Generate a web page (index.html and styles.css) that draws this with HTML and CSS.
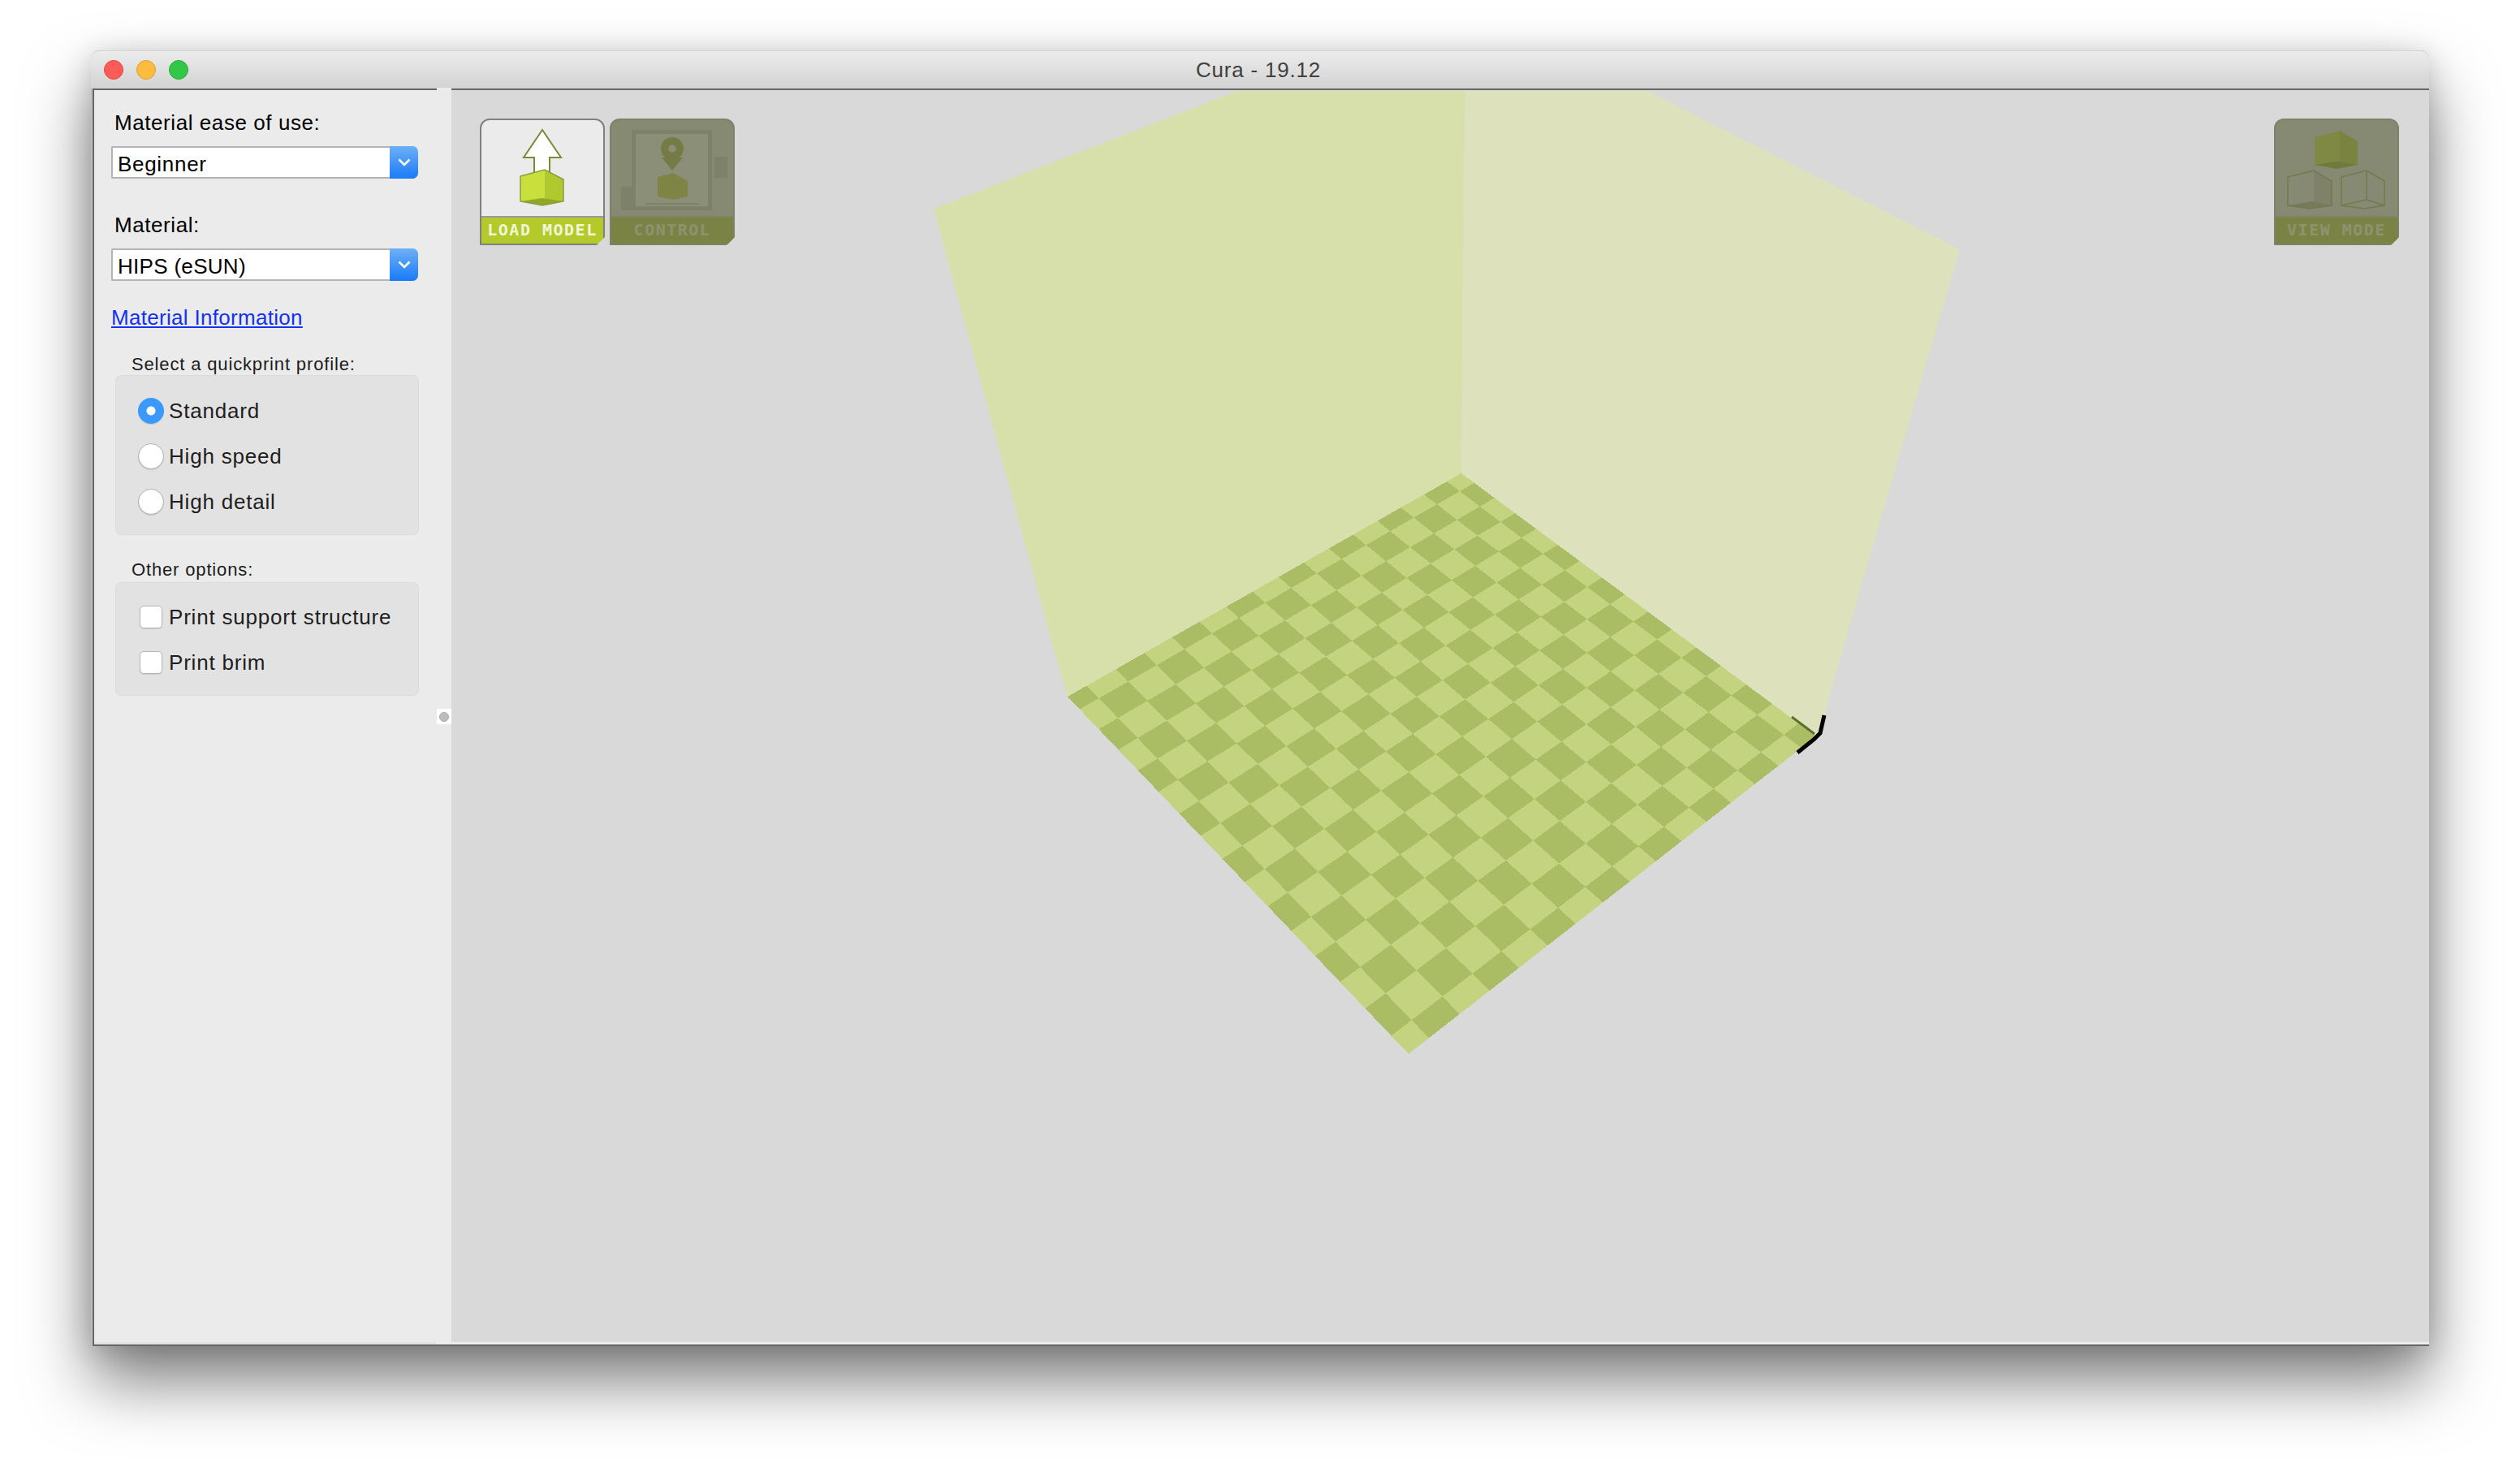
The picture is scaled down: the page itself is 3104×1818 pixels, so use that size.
FILE: index.html
```html
<!DOCTYPE html>
<html lang="en">
<head>
<meta charset="utf-8">
<title>Cura - 19.12</title>
<link rel="stylesheet" href="styles.css">
</head>
<body>
<div class="window">
  <header class="titlebar">
    <div class="lights">
      <span class="light light-close"></span>
      <span class="light light-min"></span>
      <span class="light light-max"></span>
    </div>
    <div class="title">Cura - 19.12</div>
  </header>
  <div class="main">
    <aside class="sidebar">
      <span class="splitter-cap"></span>
      <span class="splitter-handle"><span class="splitter-dot"></span></span>
      <div class="label label-first">Material ease of use:</div>
      <div class="select">
        <span class="select-value">Beginner</span>
        <span class="select-arrow"><svg width="16" height="10" viewBox="0 0 16 10"><polyline points="1.5,1.5 8,8 14.500,1.5" fill="none" stroke="#fff" stroke-width="2.600"/></svg></span>
      </div>
      <div class="label label-next">Material:</div>
      <div class="select">
        <span class="select-value select-value-tight">HIPS (eSUN)</span>
        <span class="select-arrow"><svg width="16" height="10" viewBox="0 0 16 10"><polyline points="1.5,1.5 8,8 14.500,1.5" fill="none" stroke="#fff" stroke-width="2.600"/></svg></span>
      </div>
      <a class="link" href="#">Material Information</a>
      <div class="group-title">Select a quickprint profile:</div>
      <div class="group group-radio">
        <div class="row"><span class="radio radio-on"></span><span>Standard</span></div>
        <div class="row"><span class="radio"></span><span>High speed</span></div>
        <div class="row"><span class="radio"></span><span>High detail</span></div>
      </div>
      <div class="group-title">Other options:</div>
      <div class="group group-check">
        <div class="row"><span class="check"></span><span>Print support structure</span></div>
        <div class="row"><span class="check"></span><span>Print brim</span></div>
      </div>
    </aside>
    <section class="viewport">
      <svg class="scene" viewBox="556 111 2436 1545" preserveAspectRatio="none">
        <polygon class="wall-left" points="1524,112 1805,112 1803,222 1800,583 1315,858 1298,800 1150,257"/>
        <polygon class="wall-right" points="1805,112 2029,112 2414,307 2258,840 2248,880 2237,907 1800,583 1803,222"/>
        <g id="floor"></g>
        <line class="axis-soft" x1="2207" y1="883" x2="2235" y2="904"/>
        <polyline class="axis" points="2247,881 2242,903 2234,911 2214,927"/>
      </svg>
      <div class="toolbar toolbar-left">
        <div class="tool tool-active">
          <svg class="tool-icon" viewBox="0 0 150 118">
            <polygon class="arrow" points="75,12 52,46 65,46 65,66 84,66 84,46 98,46"/>
            <polygon class="c-left" points="48,69 78,61 78,105 48,100"/>
            <polygon class="c-right" points="78,61 101,73 101,100 78,105"/>
            <polygon class="c-bottom" points="48,100 75,96 101,100 75,105"/>
            <polygon class="c-line" points="48,69 78,61 101,73 101,100 75,105 48,100"/>
          </svg>
          <div class="tool-label">LOAD MODEL</div>
        </div>
        <div class="tool tool-dim">
          <svg class="tool-icon" viewBox="0 0 150 118">
            <path class="d-frame" d="M25 12h99v99H12V82h13z"/>
            <rect class="d-inner" x="30" y="17" width="89" height="89"/>
            <rect class="d-frame" x="127" y="45" width="16" height="26"/>
            <circle class="d-pin" cx="75" cy="35" r="14"/>
            <polygon class="d-pin" points="62,46 88,46 75,62"/>
            <circle class="d-hole" cx="75" cy="35" r="4.700"/>
            <polygon class="d-cube" points="57,70 76,65 94,75 94,94 76,98 57,94"/>
            <rect class="d-frame" x="42" y="102" width="66" height="2"/>
          </svg>
          <div class="tool-label">CONTROL</div>
        </div>
      </div>
      <div class="toolbar toolbar-right">
        <div class="tool tool-dim">
          <svg class="tool-icon" viewBox="0 0 150 118">
            <polygon class="v-left" points="48,21 79,13 79,59 48,55"/>
            <polygon class="v-right" points="79,13 101,26 101,55 79,59"/>
            <polygon class="v-bottom" points="48,55 75,51 101,55 75,60"/>
            <polygon class="w-right" points="47,62 69,75 69,105 47,100"/>
            <polygon class="w-bottom" points="15,105 45,100 69,105 42,109"/>
            <polygon class="w-line" points="15,70 47,62 69,75 69,105 42,109 15,105"/>
            <polygon class="w-line" points="81,70 112,62 134,75 134,105 109,109 81,105"/>
            <polyline class="w-line" points="81,105 112,98 134,105"/>
            <line class="w-line" x1="112" y1="62" x2="112" y2="98"/>
          </svg>
          <div class="tool-label">VIEW MODE</div>
        </div>
      </div>
    </section>
  </div>
</div>
<script src="script.js"></script>
</body>
</html>
```
FILE: styles.css
```css
* { box-sizing: border-box; }
html, body { margin: 0; height: 100%; }
body {
  background: #fff;
  padding: 62px 112px 0;
  overflow: hidden;
  font-family: "Liberation Sans", Arial, sans-serif;
  color: #111;
}
.window {
  width: 2880px;
  height: 1596px;
  display: flex;
  flex-direction: column;
  border-radius: 10px 10px 0 0;
  background: #bdbdbd;
  box-shadow: 0 44px 80px rgba(0, 0, 0, .5), 0 4px 34px rgba(0, 0, 0, .16);
}
.titlebar {
  height: 47px;
  flex: none;
  display: grid;
  grid-template-columns: 1fr auto 1fr;
  align-items: center;
  padding: 0 16px;
  border-top: 1px solid #d4d4d4;
  border-radius: 10px 10px 0 0;
  background: linear-gradient(#ececec, #d2d2d2);
}
.lights { display: flex; gap: 16px; }
.light {
  width: 24px;
  height: 24px;
  border-radius: 50%;
  border: 1px solid;
}
.light-close { background: #fc5b57; border-color: #e2463f; }
.light-min { background: #fdbc40; border-color: #e1a029; }
.light-max { background: #33c748; border-color: #27aa35; }
.title {
  font-size: 26px;
  line-height: 30px;
  letter-spacing: .8px;
  color: #404040;
  transform: translateX(-2px);
}
.main {
  flex: 1;
  min-height: 0;
  display: flex;
  margin-left: 2px;
  border-top: 2px solid #666;
  border-left: 2px solid #666;
  border-bottom: 2px solid #666;
}
.sidebar {
  position: relative;
  width: 440px;
  flex: none;
  padding: 25px 0 0 21px;
  background: #ebebeb;
  display: flex;
  flex-direction: column;
  align-items: flex-start;
}
.sidebar::after {
  content: "";
  position: absolute;
  left: 0;
  right: 19px;
  bottom: 0;
  height: 3px;
  background: #e2e2e2;
}
.splitter-cap {
  position: absolute;
  top: -3px;
  right: 0;
  width: 18px;
  height: 3px;
  background: #ebebeb;
}
.splitter-handle {
  position: absolute;
  top: 762px;
  right: 0;
  width: 18px;
  height: 19px;
  background: #fff;
  display: flex;
  align-items: center;
  justify-content: center;
}
.splitter-dot {
  width: 12px;
  height: 12px;
  border-radius: 50%;
  background: #bcbcbc;
  border: 1px solid #a8a8a8;
}
.label {
  font-size: 26px;
  line-height: 30px;
  letter-spacing: .57px;
  margin: 0 0 14px 4px;
  color: #000;
}
.label-next { margin-top: 42px; }
.select {
  width: 378px;
  height: 40px;
  display: flex;
  background: #fff;
  border: 2px solid #b4b4b4;
  border-right: 0;
  border-radius: 2px 7px 7px 2px;
}
.select-value {
  flex: 1;
  padding-left: 6px;
  font-size: 26px;
  line-height: 41px;
  letter-spacing: .7px;
  color: #000;
}
.select-value-tight { letter-spacing: .3px; }
.select-arrow {
  width: 35px;
  margin: -2px 0;
  display: flex;
  align-items: center;
  justify-content: center;
  border-radius: 0 7px 7px 0;
  background: linear-gradient(#6db0f6, #1a7bf9);
}
.link {
  margin-top: 30px;
  font-size: 26px;
  line-height: 30px;
  letter-spacing: .3px;
  color: #1232f0;
  text-decoration: underline;
}
.group-title {
  margin: 30px 0 0 25px;
  font-size: 22px;
  line-height: 26px;
  letter-spacing: .85px;
  color: #1c1c1c;
}
.group {
  width: 374px;
  margin-left: 5px;
  padding: 16px 0 13px 28px;
  background: #e2e2e2;
  border-radius: 8px;
  box-shadow: inset 0 0 0 1px #dcdcdc;
}
.group-check {
  margin-top: 2px;
  padding-top: 15px;
}
.row {
  height: 56px;
  display: flex;
  align-items: center;
  gap: 6px;
  font-size: 26px;
  line-height: 30px;
  letter-spacing: .8px;
  color: #1e1e1e;
}
.radio {
  width: 32px;
  height: 32px;
  border-radius: 50%;
  background: #fff;
  border: 1px solid #b0b0b0;
  box-shadow: 0 1px 1px rgba(0, 0, 0, .12);
}
.radio-on {
  border: 0;
  background: radial-gradient(circle, #fff 0 5px, #3b99fc 6px);
}
.check {
  width: 28px;
  height: 28px;
  margin: 0 2px;
  border-radius: 5px;
  background: #fff;
  border: 1px solid #b4b4b4;
  box-shadow: 0 1px 1px rgba(0, 0, 0, .1);
}
.viewport {
  position: relative;
  flex: 1;
  min-width: 0;
  background: #d9d9d9;
}
.viewport::after {
  content: "";
  position: absolute;
  left: 0;
  right: 0;
  bottom: 0;
  height: 3px;
  background: #ececec;
}
.scene {
  display: block;
  width: 100%;
  height: 100%;
}
.wall-left { fill: #d7e0aa; }
.wall-right { fill: #dde2bd; }
.cell-dark { fill: #aabd64; shape-rendering: crispEdges; }
.cell-light { fill: #c3d380; shape-rendering: crispEdges; }
.axis { fill: none; stroke: #000; stroke-width: 5; }
.axis-soft { stroke: #5f6e2c; stroke-width: 3; }
.toolbar {
  position: absolute;
  top: 35px;
  display: flex;
  gap: 6px;
}
.toolbar-left { left: 35px; }
.toolbar-right { right: 37px; }
.tool {
  width: 154px;
  height: 156px;
  display: flex;
  flex-direction: column;
  border: 2px solid #808080;
  border-radius: 12px 12px 0 0;
  clip-path: polygon(0 0, 100% 0, 100% calc(100% - 10px), calc(100% - 10px) 100%, 0 100%);
}
.tool-icon {
  display: block;
  width: 150px;
  height: 118px;
  flex: none;
}
.tool-label {
  flex: 1;
  border-top: 2px solid #999;
  font-family: "DejaVu Sans Mono", monospace;
  font-weight: 700;
  font-size: 20px;
  line-height: 31px;
  letter-spacing: 1.500px;
  text-align: center;
}
.tool-active { background: #ebebeb; }
.tool-active .tool-label { background: #b3ca2a; color: #f2f6d8; }
.tool-dim { background: #878a72; border-color: #7f8169; }
.tool-dim .tool-label { background: #7b8344; color: #8f926f; border-top-color: #80835f; }
.arrow { fill: #fff; stroke: #7a8a3a; stroke-width: 2; }
.c-left { fill: #c9e03c; }
.c-right { fill: #afc92e; }
.c-bottom { fill: #8fa827; }
.c-line { fill: none; stroke: #8c9c45; stroke-width: 1.500; }
.d-frame { fill: #7e8169; }
.d-inner { fill: #8c8f78; }
.d-pin { fill: #767b45; }
.d-hole { fill: #8c8f78; }
.d-cube { fill: #7d8444; }
.v-left { fill: #7f8944; }
.v-right { fill: #7a8340; }
.v-bottom { fill: #6f7a3c; }
.w-right { fill: #7f8269; }
.w-bottom { fill: #777b5a; }
.w-line { fill: none; stroke: #73794e; stroke-width: 1.500; }
```
FILE: script.js
```js
(function () {
  var NS = 'http://www.w3.org/2000/svg';
  var back = [1800, 583], right = [2237, 907], front = [1735, 1298], left = [1315, 858];
  var CELLS = 16, CUT = 0.35;

  // Projective map of the unit square onto the four floor corners.
  function makeMap(p0, p1, p2, p3) {
    var dx1 = p1[0] - p2[0], dx2 = p3[0] - p2[0], sx = p0[0] - p1[0] + p2[0] - p3[0];
    var dy1 = p1[1] - p2[1], dy2 = p3[1] - p2[1], sy = p0[1] - p1[1] + p2[1] - p3[1];
    var det = dx1 * dy2 - dx2 * dy1;
    var g = (sx * dy2 - dx2 * sy) / det;
    var h = (dx1 * sy - sx * dy1) / det;
    var a = p1[0] - p0[0] + g * p1[0], b = p3[0] - p0[0] + h * p3[0], c = p0[0];
    var d = p1[1] - p0[1] + g * p1[1], e = p3[1] - p0[1] + h * p3[1], f = p0[1];
    return function (u, v) {
      var w = g * u + h * v + 1;
      return [(a * u + b * v + c) / w, (d * u + e * v + f) / w];
    };
  }

  function edge(k) {
    var t = (k - CUT) / (CELLS - 2 * CUT);
    return Math.max(0, Math.min(1, t));
  }

  var map = makeMap(back, right, front, left);
  var floor = document.getElementById('floor');
  for (var i = 0; i < CELLS; i++) {
    for (var j = 0; j < CELLS; j++) {
      var u0 = edge(i), u1 = edge(i + 1), v0 = edge(j), v1 = edge(j + 1);
      var pts = [map(u0, v0), map(u1, v0), map(u1, v1), map(u0, v1)];
      var poly = document.createElementNS(NS, 'polygon');
      poly.setAttribute('points', pts.map(function (p) { return p[0].toFixed(1) + ',' + p[1].toFixed(1); }).join(' '));
      poly.setAttribute('class', (i + j) % 2 ? 'cell-dark' : 'cell-light');
      floor.appendChild(poly);
    }
  }
})();
```
